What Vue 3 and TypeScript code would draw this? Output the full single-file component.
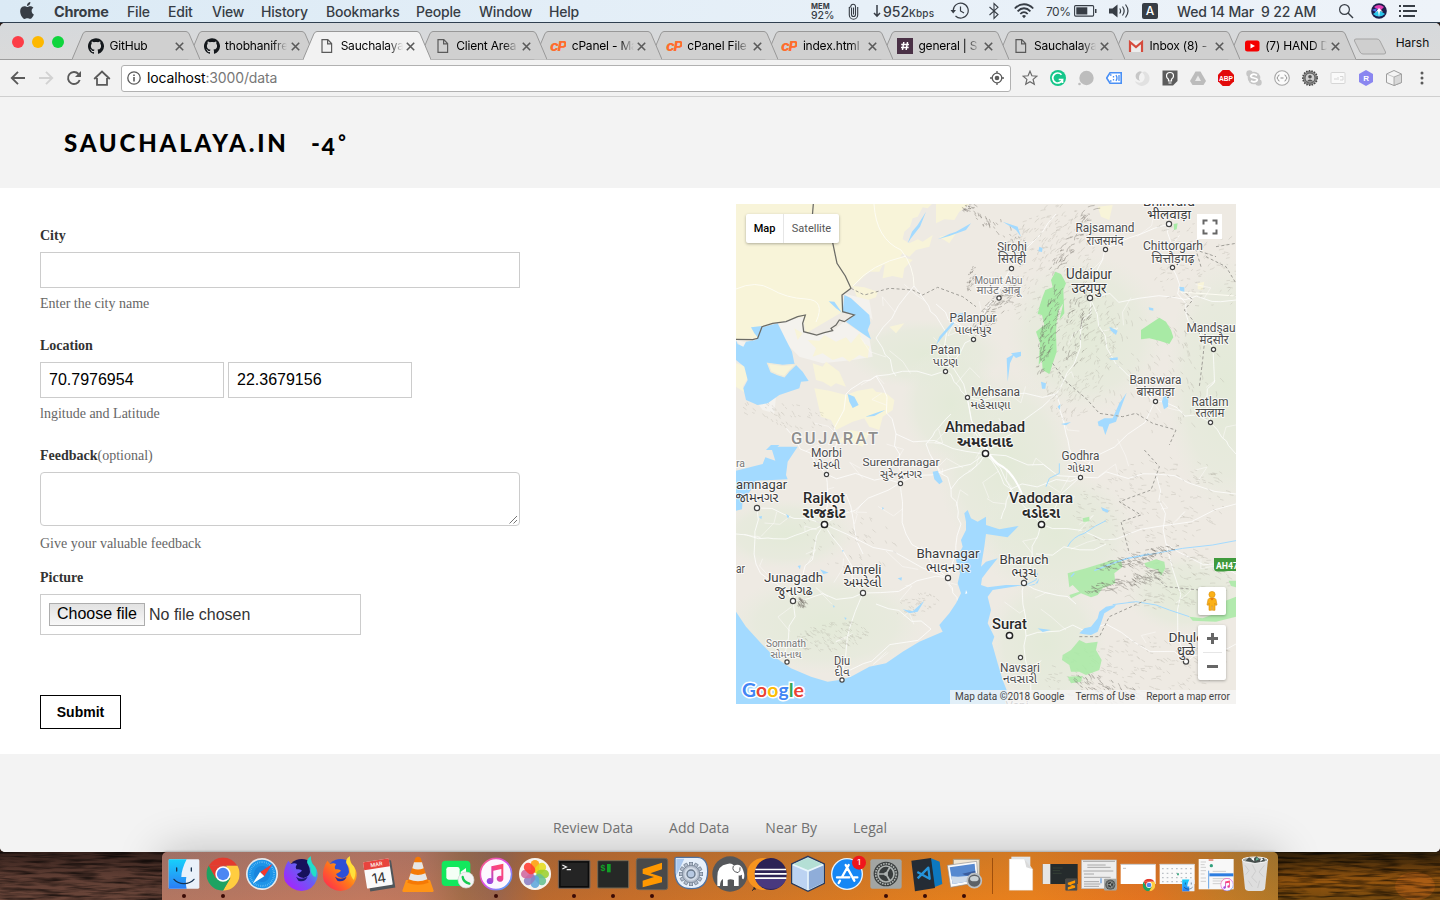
<script setup lang="ts">
interface Tab { icon: string; title: string; active?: boolean }
interface Place {
  name: string; x: number; y: number; w: number; size: number
  local?: string; lx?: number; ly?: number; lw?: number
  dot?: [number, number]; kind?: 'major' | 'mid' | 'minor'
}

const menus: string[] = ['File', 'Edit', 'View', 'History', 'Bookmarks', 'People', 'Window', 'Help']

const tabs: Tab[] = [
  { icon: 'github', title: 'GitHub' },
  { icon: 'github', title: 'thobhanifre' },
  { icon: 'page', title: 'Sauchalaya', active: true },
  { icon: 'page', title: 'Client Area' },
  { icon: 'cpanel', title: 'cPanel - Ma' },
  { icon: 'cpanel', title: 'cPanel File' },
  { icon: 'cpanel', title: 'index.html' },
  { icon: 'slack', title: 'general | S' },
  { icon: 'page', title: 'Sauchalaya' },
  { icon: 'gmail', title: 'Inbox (8) -' },
  { icon: 'youtube', title: '(7) HAND D' },
]

const links: string[] = ['Review Data', 'Add Data', 'Near By', 'Legal']

const places: Place[] = [
  { name: 'Bhilwara', x: 433, y: 2, w: 52, size: 13, local: 'भीलवाड़ा', ly: 14.5, lw: 44, dot: [433, 20], kind: 'mid' },
  { name: 'Rajsamand', x: 369, y: 28, w: 59, size: 12, local: 'राजसमंद', ly: 40.5, lw: 37, dot: [369.5, 45.5] },
  { name: 'Sirohi', x: 276, y: 47, w: 30, size: 12, local: 'सिरोही', ly: 59, lw: 28, dot: [275.5, 64.5] },
  { name: 'Chittorgarh', x: 437, y: 46, w: 60, size: 12, local: 'चित्तौड़गढ़', ly: 58.5, lw: 43, dot: [436.5, 63.5] },
  { name: 'Udaipur', x: 353, y: 75, w: 46, size: 14, local: 'उदयपुर', ly: 88.5, lw: 35, dot: [354, 94], kind: 'mid' },
  { name: 'Mount Abu', x: 262.5, y: 79.5, w: 48, size: 10.5, local: 'माउंट आबू', ly: 90, lw: 44, dot: [263, 94], kind: 'minor' },
  { name: 'Palanpur', x: 237, y: 118, w: 47, size: 12, local: 'પાલનપુર', ly: 130, lw: 37, dot: [237.5, 135.5] },
  { name: 'Patan', x: 209.5, y: 150, w: 30, size: 12, local: 'પાટણ', ly: 162, lw: 25, dot: [209.5, 167.5] },
  { name: 'Mandsau', x: 475, y: 128, w: 49, size: 12, local: 'मंदसौर', lx: 478, ly: 140, lw: 29, dot: [477.5, 145.5] },
  { name: 'Banswara', x: 419.5, y: 180, w: 52, size: 12, local: 'बांसवाड़ा', ly: 192, lw: 38, dot: [419.5, 197.5] },
  { name: 'Ratlam', x: 474, y: 201.5, w: 37, size: 12, local: 'रतलाम', ly: 213, lw: 29, dot: [474.5, 218.5] },
  { name: 'Mehsana', x: 259.5, y: 192, w: 49, size: 12, local: 'મહેસાણા', lx: 254.5, ly: 204.5, lw: 40, dot: [231.5, 193.5] },
  { name: 'Ahmedabad', x: 249, y: 228, w: 80, size: 14.5, local: 'અમદાવાદ', ly: 242.5, lw: 56, dot: [249.5, 249.5], kind: 'major' },
  { name: 'Morbi', x: 90.5, y: 253, w: 31, size: 12, local: 'મોરબી', ly: 265, lw: 27, dot: [90.5, 270.5] },
  { name: 'Surendranagar', x: 165, y: 262, w: 77, size: 11.5, local: 'સુરેન્દ્રનગર', ly: 274, lw: 42, dot: [164.5, 279.5] },
  { name: 'amnagar', x: 25.5, y: 285, w: 51, size: 13.5, local: 'જામનગર', lx: 21, ly: 297.5, lw: 43, dot: [21, 304], kind: 'mid' },
  { name: 'ra', x: 4.5, y: 263, w: 9, size: 11, kind: 'minor' },
  { name: 'ar', x: 4.5, y: 368.5, w: 9, size: 12 },
  { name: 'Rajkot', x: 88, y: 299, w: 42, size: 14.5, local: 'રાજકોટ', ly: 313.5, lw: 43, dot: [88.5, 320.5], kind: 'major' },
  { name: 'Godhra', x: 344.5, y: 256, w: 38, size: 12, local: 'ગોધરા', ly: 268, lw: 26, dot: [344.5, 273.5] },
  { name: 'Vadodara', x: 305, y: 299, w: 64, size: 14.5, local: 'વડોદરા', ly: 313.5, lw: 38, dot: [305.5, 320.5], kind: 'major' },
  { name: 'Bhavnagar', x: 212, y: 354, w: 63, size: 13.5, local: 'ભાવનગર', ly: 367.5, lw: 44, dot: [212, 374], kind: 'mid' },
  { name: 'Amreli', x: 126.5, y: 370, w: 38, size: 13.5, local: 'અમરેલી', ly: 383, lw: 38, dot: [127, 389], kind: 'mid' },
  { name: 'Junagadh', x: 57.5, y: 378, w: 59, size: 13.5, local: 'જુનાગઢ', ly: 391, lw: 38, dot: [57, 397], kind: 'mid' },
  { name: 'Bharuch', x: 288, y: 360, w: 49, size: 13.5, local: 'ભરૂચ', ly: 373, lw: 25, dot: [288, 379], kind: 'mid' },
  { name: 'Surat', x: 273.5, y: 425, w: 35, size: 14.5, dot: [273.5, 431.5], kind: 'major' },
  { name: 'Navsari', x: 284, y: 467.5, w: 40, size: 12, local: 'નવસારી', ly: 478.5, lw: 34, dot: [284.5, 453.5] },
  { name: 'Somnath', x: 50, y: 443, w: 40, size: 10.5, local: 'સોમનાથ', ly: 453.5, lw: 31, dot: [51, 458], kind: 'minor' },
  { name: 'Diu', x: 106, y: 460.5, w: 16, size: 12, local: 'દીવ', ly: 472, lw: 15, dot: [106, 476] },
  { name: 'Dhule', x: 450, y: 438, w: 35, size: 13.5, local: 'धुळे', ly: 451.5, lw: 18, dot: [450, 457.5], kind: 'mid' },
  { name: 'Vapi', x: 281, y: 506, w: 23, size: 12, kind: 'minor' },
]

/* Seeded generator, so hills and roads come out the same on every load. */
let seed = 11
const rnd = (): number => {
  seed = (seed * 16807) % 2147483647
  return seed / 2147483647
}

interface Ridge { x: number; y: number; rx: number; ry: number; tilt: number; n: number; len: number }
const hills = (r: Ridge): string => {
  let d = ''
  const a = (r.tilt * Math.PI) / 180
  for (let i = 0; i < r.n; i++) {
    const t = rnd() * Math.PI * 2
    const q = Math.sqrt(rnd())
    const u = Math.cos(t) * q * r.rx
    const v = Math.sin(t) * q * r.ry
    const px = r.x + u * Math.cos(a) - v * Math.sin(a)
    const py = r.y + u * Math.sin(a) + v * Math.cos(a)
    const b = a + (rnd() - 0.5) * 1.1
    const l = r.len * (0.4 + rnd())
    d += `M${px.toFixed(1)} ${py.toFixed(1)}l${(Math.cos(b) * l * 0.5).toFixed(1)} ${(Math.sin(b) * l * 0.5 + 1).toFixed(1)}l${(Math.cos(b + 0.5) * l * 0.5).toFixed(1)} ${(Math.sin(b + 0.5) * l * 0.5).toFixed(1)}`
  }
  return d
}
const strongHills: string = [
  { x: 258, y: 105, rx: 34, ry: 9, tilt: -50, n: 110, len: 4 },
  { x: 312, y: 128, rx: 46, ry: 8, tilt: -78, n: 90, len: 6 },
  { x: 340, y: 125, rx: 46, ry: 12, tilt: -82, n: 50, len: 6 },
  { x: 336, y: 35, rx: 45, ry: 7, tilt: -58, n: 50, len: 6 },
  { x: 390, y: 377, rx: 45, ry: 6, tilt: -14, n: 100, len: 5 },
  { x: 400, y: 354, rx: 42, ry: 6, tilt: -16, n: 100, len: 4 },
  { x: 65, y: 398, rx: 5, ry: 5, tilt: 20, n: 35, len: 3 },
  { x: 235, y: 74, rx: 14, ry: 4, tilt: -80, n: 36, len: 3 },
  { x: 262, y: 22, rx: 30, ry: 8, tilt: 30, n: 28, len: 3 },
  { x: 232, y: 3, rx: 9, ry: 3, tilt: -20, n: 20, len: 3 },
  { x: 370, y: 482, rx: 34, ry: 9, tilt: 15, n: 60, len: 4 },
].map(hills).join('')
const softHills: string = [
  { x: 310, y: 60, rx: 62, ry: 45, tilt: -62, n: 260, len: 5 },
  { x: 345, y: 150, rx: 70, ry: 32, tilt: -75, n: 240, len: 5 },
  { x: 460, y: 60, rx: 45, ry: 55, tilt: -45, n: 130, len: 4 },
  { x: 420, y: 165, rx: 70, ry: 60, tilt: 40, n: 130, len: 4 },
  { x: 415, y: 300, rx: 80, ry: 45, tilt: -12, n: 220, len: 4 },
  { x: 440, y: 375, rx: 60, ry: 30, tilt: -10, n: 170, len: 5 },
  { x: 400, y: 465, rx: 95, ry: 32, tilt: -8, n: 240, len: 4 },
  { x: 95, y: 432, rx: 36, ry: 14, tilt: -8, n: 140, len: 3 },
  { x: 110, y: 335, rx: 50, ry: 30, tilt: 10, n: 60, len: 3 },
  { x: 50, y: 210, rx: 48, ry: 12, tilt: 10, n: 60, len: 3 },
  { x: 180, y: 400, rx: 22, ry: 10, tilt: -20, n: 40, len: 3 },
].map(hills).join('')

const net: [number, number, number, number][] = [
  [249, 250, 305, 320], [249, 250, 164, 279], [249, 250, 231, 193], [249, 250, 344, 273], [225, 320, 212, 374],
  [249, 250, 320, 190], [164, 279, 88, 320], [88, 320, 21, 304], [88, 320, 90, 270], [88, 320, 57, 397],
  [88, 320, 127, 389], [88, 320, 212, 374], [127, 389, 106, 470], [57, 397, 51, 458], [57, 397, 127, 389],
  [127, 389, 212, 374], [90, 270, 164, 279], [90, 270, 50, 224], [305, 320, 344, 273], [305, 320, 288, 379],
  [288, 379, 290, 432], [290, 432, 295, 496], [290, 432, 370, 420], [370, 420, 450, 458], [305, 320, 380, 335],
  [380, 335, 500, 300], [344, 273, 420, 270], [420, 270, 500, 290], [344, 273, 419, 197], [419, 197, 474, 218],
  [474, 218, 477, 145], [477, 145, 450, 110], [436, 63, 450, 110], [354, 94, 436, 93], [436, 93, 500, 96],
  [354, 94, 369, 45], [369, 45, 433, 20], [354, 94, 340, 155], [340, 155, 320, 190], [320, 190, 231, 193],
  [231, 193, 209, 167], [209, 167, 237, 135], [237, 135, 275, 64], [275, 64, 320, 10], [237, 135, 200, 100],
  [209, 167, 140, 172], [140, 172, 110, 190], [110, 190, 90, 270], [140, 134, 160, 172], [178, 82, 140, 134],
  [178, 82, 200, 112], [200, 112, 231, 193], [436, 63, 433, 20], [354, 94, 380, 160], [380, 160, 419, 197],
  [344, 273, 330, 230], [330, 230, 320, 190], [164, 279, 170, 330], [170, 330, 212, 374], [57, 397, 20, 360],
  [20, 360, 21, 304], [0, 330, 50, 335], [50, 335, 88, 320], [140, 400, 195, 425], [106, 470, 195, 425],
  [212, 374, 222, 400], [160, 230, 249, 250], [160, 230, 140, 172], [160, 230, 164, 279], [231, 193, 249, 250],
  [430, 340, 450, 458], [430, 340, 500, 370], [450, 458, 500, 440], [474, 218, 500, 250], [420, 270, 430, 340],
  [300, 350, 370, 340], [288, 379, 340, 400], [215, 210, 190, 240], [190, 240, 215, 285], [215, 285, 249, 250],
  [215, 285, 225, 320], [275, 285, 265, 315], [249, 250, 275, 285], [275, 285, 344, 273], [110, 290, 127, 350],
]
const roads: string = net.map(([x1, y1, x2, y2]) => {
  const k = Math.hypot(x2 - x1, y2 - y1) * 0.12
  const j = (): number => (rnd() - 0.5) * k
  const p = (f: number): string => `${(x1 + (x2 - x1) * f + j()).toFixed(1)} ${(y1 + (y2 - y1) * f + j()).toFixed(1)}`
  return `M${x1} ${y1}L${p(0.2)} ${p(0.4)} ${p(0.6)} ${p(0.8)} ${x2} ${y2}`
}).join('')
const lanes: string = net.map(([x1, y1, x2, y2]) => {
  const mx = (x1 + x2) / 2
  const my = (y1 + y2) / 2
  return `M${mx.toFixed(1)} ${my.toFixed(1)}l${((rnd() - 0.5) * 34).toFixed(1)} ${((rnd() - 0.5) * 34).toFixed(1)} ${((rnd() - 0.5) * 34).toFixed(1)} ${((rnd() - 0.5) * 34).toFixed(1)}`
}).join('')

const teeth: number[] = Array.from({ length: 12 }, (_, i) => i * 30)
const petals: { a: number; c: string }[] = ['#ff9d0a', '#e6dc1c', '#9bd02f', '#67c08f', '#5fa7dd', '#8c7fc4', '#d0679f', '#ff3b30']
  .map((c, i) => ({ a: i * 45, c }))
</script>

<template>
  <div class="desktop">
    <svg class="symbols" width="0" height="0">
      <symbol id="s-chrome" viewBox="-50 -50 100 100">
        <path fill="#e33b2e" d="M-43-25A50 50 0 0 1 43-25H0Z" />
        <path fill="#e33b2e" d="M-43-25 0-25 0 0-22 13Z" />
        <path fill="#ffcd40" d="M43.300-25A50 50 0 0 1 0 50L22 12 10-25Z" />
        <path fill="#1da362" d="M-43-25A50 50 0 0 0 0 50L22 13-22 13Z" />
        <circle r="23" fill="#fff" /><circle r="18.500" fill="#4b87f3" />
      </symbol>
      <symbol id="s-itunes" viewBox="-50 -50 100 100">
        <defs><linearGradient id="gi" x1="0" y1="0" x2="1" y2="1"><stop offset="0" stop-color="#ff5a78" /><stop offset=".5" stop-color="#d94ff0" /><stop offset="1" stop-color="#35b9fb" /></linearGradient>
          <linearGradient id="gi2" x1="0" y1="1" x2="1" y2="0"><stop offset="0" stop-color="#7c4dff" /><stop offset=".6" stop-color="#f5428b" /><stop offset="1" stop-color="#ff5064" /></linearGradient></defs>
        <circle r="47" fill="#fdf8ff" stroke="url(#gi)" stroke-width="5" />
        <path fill="url(#gi2)" d="M-14-23 22-31V15A10 9 0 1 1 16 6V-15L-8-10V22A10 9 0 1 1-14 13Z" />
      </symbol>
      <symbol id="s-finder" viewBox="-50 -50 100 100">
        <defs><linearGradient id="gf" x1="0" y1="0" x2="0" y2="1"><stop offset="0" stop-color="#17d0fb" /><stop offset="1" stop-color="#2b7df5" /></linearGradient></defs>
        <rect x="-46" y="-44" width="92" height="88" rx="4" fill="#e9f1fa" />
        <path fill="url(#gf)" d="M-46-44H8C-2-25-8-5-8 9H7C5 20 5 32 8 44H-46Z" />
        <path fill="none" stroke="#17324f" stroke-width="4" stroke-linecap="round" d="M-22-18V-9M22-18V-9M-30 16C-15 33 15 33 30 16" />
      </symbol>
      <symbol id="s-sublime" viewBox="-50 -50 100 100">
        <rect x="-47" y="-47" width="94" height="94" rx="8" fill="#494949" stroke="#6b6256" stroke-width="3" />
        <path fill="#ff9800" d="M-28-15 30-34V-14L-5-2 30 9V25L-28 40V20L6 9-28-1Z" />
      </symbol>
      <symbol id="s-gear" viewBox="-50 -50 100 100">
        <rect x="-47" y="-44" width="94" height="88" rx="6" fill="#a2a5a3" />
        <circle r="37" fill="#393d3d" /><circle r="31" fill="none" stroke="#aeb3b1" stroke-width="5" stroke-dasharray="5 3" />
        <circle r="24" fill="none" stroke="#aeb3b1" stroke-width="5" />
        <path stroke="#aeb3b1" stroke-width="5" d="M0 0H-24M0 0 12-21M0 0 12 21" /><circle r="6" fill="#aeb3b1" />
      </symbol>
    </svg>

    <header class="menubar">
      <nav class="menus">
        <svg width="14" height="17" viewBox="2 0 20 24"><path fill="#373d45" d="M12.152 6.896c-.948 0-2.415-1.078-3.960-1.040-2.040.027-3.910 1.183-4.961 3.014-2.117 3.675-.546 9.103 1.519 12.090 1.013 1.454 2.208 3.090 3.792 3.039 1.520-.065 2.090-.987 3.935-.987 1.831 0 2.350.987 3.960.948 1.637-.026 2.676-1.480 3.676-2.948 1.156-1.688 1.636-3.325 1.662-3.415-.039-.013-3.182-1.221-3.220-4.857-.026-3.040 2.480-4.494 2.597-4.559-1.429-2.090-3.623-2.324-4.390-2.376-2-.156-3.675 1.090-4.610 1.090zM15.530 3.830c.843-1.012 1.400-2.427 1.245-3.830-1.207.052-2.662.805-3.532 1.818-.780.896-1.454 2.338-1.273 3.714 1.338.104 2.715-.688 3.559-1.701" /></svg>
        <b>Chrome</b>
        <span v-for="m in menus" :key="m">{{ m }}</span>
      </nav>
      <div class="status">
        <div class="mem"><b>MEM</b><span>92%</span></div>
        <svg width="11" height="17" viewBox="0 0 11 17"><path fill="none" stroke="#373d45" stroke-width="1.100" d="M3.500 4.500V11.500a2 2 0 0 0 4 0V3.500a2.300 2.300 0 0 0-4.600 0M1.300 4V12a4 4 0 0 0 8.400 0V4M5.500 4.500V11.500M2.900 3.500A3 3 0 0 0 1.300 5" /></svg>
        <div class="net"><svg width="8" height="14" viewBox="0 0 8 14"><path fill="none" stroke="#373d45" stroke-width="1.500" d="M4 1V12M1 9 4 12.200 7 9" /></svg><span>952</span><small>Kbps</small></div>
        <svg width="20" height="18" viewBox="0 0 20 18"><path fill="none" stroke="#373d45" stroke-width="1.200" d="M3.200 8.500A7.500 7.500 0 1 1 5.500 14M10.500 4.500V9L14 11" /><path fill="#373d45" d="M.5 8H6L3.200 11.500Z" /></svg>
        <svg width="20" height="18" viewBox="0 0 20 18"><path fill="none" stroke="#373d45" stroke-width="1.100" d="M5.500 5 14 12.500 10 16.500V1.500L14 5.300 5.500 13" /></svg>
        <svg width="20" height="16" viewBox="0 0 20 16"><g fill="none" stroke="#373d45" stroke-width="1.800"><path d="M.8 5.500C6-.2 14-.2 19.200 5.500M3.600 8.300C7.500 4.200 12.500 4.200 16.400 8.300M6.300 11C8.600 8.600 11.400 8.600 13.700 11" /></g><path fill="#373d45" d="M8 13Q10 11.200 12 13L10 15.300Z" /></svg>
        <span class="pct">70%</span>
        <svg width="24" height="12" viewBox="0 0 24 12"><rect x=".6" y=".6" width="19" height="10.500" rx="1" fill="none" stroke="#373d45" stroke-width="1.100" /><rect x="2.300" y="2.300" width="11" height="7.200" fill="#373d45" /><path fill="#373d45" d="M21 4H22.500V8H21Z" /></svg>
        <svg width="22" height="16" viewBox="0 0 22 16"><path fill="#373d45" d="M0 5.500H3.500L8.500 1.500V14.500L3.500 10.500H0Z" /><path fill="none" stroke="#373d45" stroke-width="1.200" d="M10.700 5.500Q12.500 8 10.700 10.500M13.500 3.500Q16.800 8 13.500 12.500M16.500 1.500Q21.500 8 16.500 14.500" /></svg>
        <span class="input-a">A</span>
        <span class="date">Wed 14 Mar&nbsp; 9 22 AM</span>
        <svg width="16" height="16" viewBox="0 0 16 16"><circle cx="6.500" cy="6.500" r="4.900" fill="none" stroke="#373d45" stroke-width="1.200" /><path stroke="#373d45" stroke-width="1.400" d="M10 10 15 15" /></svg>
        <svg width="16" height="16" viewBox="-8 -8 16 16"><circle r="7.800" fill="#1c1d4b" /><path fill="#e23fb5" d="M-5-4Q0-8 5-4L1 0Z" /><path fill="#2bc6ea" d="M-6 3 0-1 6 3Q0 8-6 3Z" /><path fill="#fff" d="M0-3 4 1 1 0 0 6-1 0-4 2Z" /><path fill="#4c67e8" d="M-7-1-2-3-3 1Z" /></svg>
        <svg width="20" height="14" viewBox="0 0 20 14"><path stroke="#373d45" stroke-width="1.800" d="M1 2H3M5 2H17M1 7H3M5 7H19M1 12H3M5 12H17" /></svg>
      </div>
    </header>

    <section class="window">
      <div class="tabstrip">
        <div class="lights"><i class="red" /><i class="amber" /><i class="green" /></div>
        <div class="tabs">
          <div v-for="(t, i) in tabs" :key="i" class="tab" :class="{ active: t.active }" :style="{ zIndex: t.active ? 30 : 20 - i }">
            <svg class="shape" width="128" height="29" viewBox="0 0 128 29">
              <path class="face" d="M0 28.500 10.800 3Q12 .5 14 .5H114Q116 .5 117.200 3L128 28.500Z" />
              <path class="edge" d="M0 28.500 10.800 3Q12 .5 14 .5H114Q116 .5 117.200 3L128 28.500" />
            </svg>
            <svg class="fav" width="16" height="16" viewBox="0 0 16 16">
              <g v-if="t.icon === 'github'" transform="scale(.667)"><path fill="#14181c" d="M12 .297c-6.630 0-12 5.373-12 12 0 5.303 3.438 9.800 8.205 11.385.6.113.82-.258.82-.577 0-.285-.010-1.040-.015-2.040-3.338.724-4.042-1.610-4.042-1.610C4.422 18.070 3.633 17.700 3.633 17.700c-1.087-.744.084-.729.084-.729 1.205.084 1.838 1.236 1.838 1.236 1.070 1.835 2.809 1.305 3.495.998.108-.776.417-1.305.76-1.605-2.665-.3-5.466-1.332-5.466-5.930 0-1.310.465-2.380 1.235-3.220-.135-.303-.54-1.523.105-3.176 0 0 1.005-.322 3.300 1.230.96-.267 1.980-.399 3-.405 1.020.006 2.040.138 3 .405 2.280-1.552 3.285-1.230 3.285-1.230.645 1.653.24 2.873.12 3.176.765.84 1.230 1.910 1.230 3.220 0 4.610-2.805 5.625-5.475 5.920.42.36.81 1.096.81 2.220 0 1.606-.015 2.896-.015 3.286 0 .315.21.69.825.57C20.565 22.092 24 17.592 24 12.297c0-6.627-5.373-12-12-12" /></g>
              <path v-else-if="t.icon === 'page'" fill="none" stroke="#5a5a5a" stroke-width="1.200" d="M3 1.600H8.800L12.600 5.600V14.400H3ZM8.600 1.600V5.800H12.600" />
              <text v-else-if="t.icon === 'cpanel'" class="cp" x="0" y="12.500" textLength="16" lengthAdjust="spacingAndGlyphs">cP</text>
              <g v-else-if="t.icon === 'slack'"><rect width="16" height="16" fill="#4a3146" /><path stroke="#fff" stroke-width="1.500" d="M6.800 4 5.500 12M10.500 4 9.200 12M4.200 6.500H12M4 9.500H11.700" /></g>
              <g v-else-if="t.icon === 'gmail'"><rect x="1" y="2.500" width="14" height="11.500" fill="#ececec" /><path fill="none" stroke="#d54b3d" stroke-width="2.200" d="M2 14V4L8 9 14 4V14" /></g>
              <g v-else><rect x="1" y="2.500" width="14.500" height="11" rx="2.500" fill="#f40000" /><path fill="#fff" d="M6.500 5.500 11 8 6.500 10.500Z" /></g>
            </svg>
            <span class="title">{{ t.title }}</span>
            <svg class="close" width="9" height="9" viewBox="0 0 9 9"><path stroke="#5a5a5a" stroke-width="1.600" d="M.8.8 8.200 8.200M8.200.8.8 8.200" /></svg>
          </div>
        </div>
        <svg class="newtab" width="34" height="18" viewBox="0 0 34 18"><path fill="#cfcfcf" stroke="#a5a5a5" d="M3 1H24Q26 1 27 3L32.500 14Q33 16 31 16H10Q8 16 7 14L1.500 3Q1 1 3 1Z" /></svg>
        <span class="user">Harsh</span>
      </div>

      <div class="toolbar">
        <div class="navbtns">
          <svg width="16" height="16" viewBox="0 0 16 16"><path fill="none" stroke="#5a5a5a" stroke-width="1.900" d="M15 8H2.500M8 1.800 1.800 8 8 14.200" /></svg>
          <svg width="16" height="16" viewBox="0 0 16 16"><path fill="none" stroke="#d2d2d2" stroke-width="1.900" d="M1 8H13.500M8 1.800 14.200 8 8 14.200" /></svg>
          <svg width="16" height="16" viewBox="0 0 16 16"><path fill="none" stroke="#5a5a5a" stroke-width="1.900" d="M13.700 10A6 6 0 1 1 12.500 4" /><path fill="#5a5a5a" d="M15 1V7H9Z" /></svg>
          <svg width="18" height="16" viewBox="0 0 18 16"><path fill="none" stroke="#5a5a5a" stroke-width="1.800" d="M1.200 9 9 1.500 16.800 9M4 8V14.800H14V8" /></svg>
        </div>
        <div class="omnibox">
          <svg width="14" height="14" viewBox="0 0 14 14"><circle cx="7" cy="7" r="6.200" fill="none" stroke="#5a5a5a" stroke-width="1.300" /><path stroke="#5a5a5a" stroke-width="1.600" d="M7 6V10.500M7 3.500V5" /></svg>
          <span class="url">localhost<i>:3000/data</i></span>
          <svg width="16" height="16" viewBox="-8 -8 16 16"><circle r="4.800" fill="none" stroke="#5a5a5a" stroke-width="1.300" /><circle r="2.300" fill="#5a5a5a" /><path stroke="#5a5a5a" stroke-width="1.300" d="M0-7V-5M0 7V5M-7 0H-5M7 0H5" /></svg>
        </div>
        <div class="extensions">
          <svg viewBox="-8 -8 16 16"><path fill="none" stroke="#6b6b6b" stroke-width="1.200" d="M0-6.800 1.900-2.200 6.900-1.800 3.100 1.400 4.300 6.300 0 3.700-4.300 6.300-3.100 1.400-6.900-1.800-1.900-2.200Z" /></svg>
          <svg viewBox="-8 -8 16 16"><circle r="8" fill="#15c68a" /><path fill="none" stroke="#fff" stroke-width="1.700" d="M3.500-3.300A5 5 0 1 0 4.500 1.500H.7M4.500 1.500V5" /></svg>
          <svg viewBox="-8 -8 16 16"><circle r="7.200" fill="#bdbdbd" cx=".5" /><circle cx="-6.500" cy="6" r="1.300" fill="#bdbdbd" /></svg>
          <svg viewBox="-8 -8 16 16"><path fill="#fff" stroke="#4a90f5" stroke-width="1.600" d="M-7.300 0-4-5.200H7.200V5.200H-4Z" /><path stroke="#4a90f5" stroke-width="1.300" d="M-2.500-3H-4M-2.500 3H-4M-.5-2V-.5M-.5 1V2.500M2-3Q4 0 2 3M5-3V3" fill="none" /></svg>
          <svg viewBox="-8 -8 16 16"><path fill="#e1e1e1" d="M3-6.500A7.500 7.500 0 1 1-7 3Q-1 7 2 2 4-2 0-6Z" /><path fill="#c7c7c7" d="M-6-4Q-3-8 0-6-5-2-2 3-8 1-6-4Z" /></svg>
          <svg viewBox="-8 -8 16 16"><path fill="#5c5c5c" d="M-7.500-7.500H7.500V3L3 7.500H-7.500Z" /><path fill="none" stroke="#fff" stroke-width="1.200" d="M-1.500 3V1.300Q-3.500 0-3.500-2A3.500 3.500 0 0 1 3.500-2Q3.500 0 1.500 1.300V3ZM-1.500 5H1.500" /></svg>
          <svg viewBox="-8 -8 16 16"><path fill="#bcbcbc" d="M-2.500-6.500H2.500L8 3 5.500 7H-5.500L-8 3Z" /><path fill="#e9e9e9" d="M0-2.500 3 3H-3Z" /></svg>
          <svg viewBox="-8 -8 16 16"><path fill="#e20a0a" d="M-3.300-8H3.300L8-3.300V3.300L3.300 8H-3.300L-8 3.300V-3.300Z" /><text class="abp" x="-7" y="2.700" textLength="14" lengthAdjust="spacingAndGlyphs">ABP</text></svg>
          <svg viewBox="-8 -8 16 16"><circle r="6.300" fill="#c6c6c6" /><circle cx="-4.500" cy="-4.500" r="3.200" fill="#c6c6c6" /><circle cx="4.500" cy="4.500" r="3.200" fill="#c6c6c6" /><path fill="none" stroke="#fff" stroke-width="1.700" d="M3-2.500Q0-5-2.500-3T0 0 2.500 3-3 2.800" /></svg>
          <svg viewBox="-8 -8 16 16"><circle r="7.300" fill="#fbfbfb" stroke="#a5a5a5" stroke-width="1.100" /><path fill="none" stroke="#8c8c8c" d="M-2.500-3Q-4-3-4-1.500L-5 0-4 1.500Q-4 3-2.500 3M2.500-3Q4-3 4-1.500L5 0 4 1.500Q4 3 2.500 3M-1.500 0H1.500" /></svg>
          <svg viewBox="-8 -8 16 16"><circle r="7.200" fill="#8a8a8a" stroke="#484848" stroke-width="1.600" stroke-dasharray="1.500 1.200" /><circle r="5" fill="#cfcfcf" stroke="#555" /><circle cy="-1.200" r="1.800" fill="#555" /><path fill="#555" d="M-3.300 3.500Q0-.5 3.300 3.500Z" /></svg>
          <svg viewBox="-8 -8 16 16"><rect x="-7" y="-5.500" width="14" height="11" rx="1" fill="#fafafa" stroke="#d6d6d6" /><path stroke="#d6d6d6" d="M-4 1H-1M0-1V2M2-1.500H5V2H2" fill="none" /></svg>
          <svg viewBox="-8 -8 16 16"><path fill="#8a86f0" d="M0-8 7-4V4L0 8-7 4V-4Z" /><text class="rex" x="-2.700" y="3">R</text></svg>
          <svg viewBox="-8 -8 16 16"><path fill="#f4f4f4" stroke="#9c9c9c" d="M0-7.500 7.500-4V4.500L0 7.500-7.500 4.500V-4Z" /><path fill="#d8d8d8" stroke="#9c9c9c" stroke-width=".8" d="M0-1 7.500-4V4.500L0 7.500Z" /><path fill="none" stroke="#bdbdbd" stroke-width=".8" d="M0-1-7.500-4" /></svg>
          <svg viewBox="-8 -8 16 16"><g fill="#5a5a5a"><circle cy="-5" r="1.500" /><circle r="1.500" /><circle cy="5" r="1.500" /></g></svg>
        </div>
      </div>

      <div class="brandbar"><span class="brand">SAUCHALAYA.IN</span><span class="temp">-<em>4</em><sup>°</sup></span></div>

      <main class="content">
        <form class="form" @submit.prevent>
          <label>City</label>
          <div class="field full" />
          <p class="hint">Enter the city name</p>
          <label>Location</label>
          <div class="pair"><div class="field">70.7976954</div><div class="field">22.3679156</div></div>
          <p class="hint">lngitude and Latitude</p>
          <label>Feedback<span>(optional)</span></label>
          <div class="area"><svg width="9" height="9" viewBox="0 0 9 9"><path stroke="#666" stroke-width=".9" d="M.5 8.500 8 1M4.500 8.500 8 5" /></svg></div>
          <p class="hint tight">Give your valuable feedback</p>
          <label>Picture</label>
          <div class="file"><span class="choose">Choose file</span><span>No file chosen</span></div>
          <button class="submit">Submit</button>
        </form>

        <div class="map">
          <svg class="canvas" width="500" height="500" viewBox="0 0 500 500">
            <defs>
              <radialGradient id="plain"><stop offset="0" stop-color="#e3ead8" /><stop offset=".7" stop-color="#e5eadb" stop-opacity=".7" /><stop offset="1" stop-color="#e8ebdf" stop-opacity="0" /></radialGradient>
            </defs>
            <rect width="500" height="500" fill="#eeeae3" />
            <g fill="url(#plain)">
              <ellipse cx="270" cy="260" rx="70" ry="95" /><ellipse cx="320" cy="330" rx="80" ry="65" /><ellipse cx="310" cy="440" rx="60" ry="70" />
              <ellipse cx="90" cy="420" rx="100" ry="50" /><ellipse cx="490" cy="180" rx="60" ry="130" /><ellipse cx="350" cy="130" rx="80" ry="80" />
              <ellipse cx="190" cy="150" rx="80" ry="35" /><ellipse cx="50" cy="330" rx="70" ry="35" /><ellipse cx="450" cy="390" rx="60" ry="40" />
              <ellipse cx="215" cy="200" rx="50" ry="60" />
            </g>

            <g transform="translate(0 -4) scale(.33333)">
              <path fill="#f8f4d9" d="M0 0H600L575 25 560 22 545 50 530 55 522 80 505 95 500 118 520 130 545 118 560 125 590 105 580 140 540 150 520 170 500 160 480 185 440 195 430 215 400 215 345 265 318 285 320 335 210 400 200 350 78 380 65 415 0 418Z" />
              <path fill="#f8f4d9" d="M600 10 700 12 670 35 655 60 625 58 600 70ZM610 110 660 100 640 130ZM450 170 490 168 530 180 505 205 500 235 470 228 440 235ZM480 400 460 380 505 370ZM350 258 385 262 425 275 420 292 395 300 400 325 370 310ZM235 565 280 572 330 585 365 572 410 565 420 575 450 580 475 600 470 630 440 650 430 690 400 680 385 655 350 665 320 680 300 690 285 660 255 650ZM340 690 400 700 380 740 340 725 300 730ZM0 430 30 440 0 470ZM0 490 30 500 38 530 20 560 30 580 0 560ZM1085 20 1130 15 1120 60 1095 50ZM1385 250 1405 245 1400 270 1385 268Z" />
              <path fill="#f4f2ee" d="M125 370 160 360 205 350 203 395 242 405 290 392 325 365 400 415 410 470 350 480 260 490 190 470 150 430Z" />
              <path fill="#f8f4d9" d="M175 385 200 400 185 420ZM215 420 250 422 265 405 300 425 330 412 345 430 370 400 385 430 400 440 395 475 370 465 340 485 320 470 290 480 260 460 230 470 240 445ZM230 490 260 500 270 485 310 515 330 560 300 550 285 560 260 545 240 540Z" />
              <path fill="#f4f2ee" d="M0 420 40 430 20 445ZM65 610 120 590 115 640 80 630ZM320 280 400 300 410 360 345 295Z" />
            </g>

            <path :d="lanes" fill="none" stroke="#fbfaf7" stroke-width=".7" opacity=".8" />
            <path :d="roads" fill="none" stroke="#fff" stroke-width="1" opacity=".75" />
            <path fill="none" stroke="#fff" stroke-width="2" d="M249 240Q252 252 262 260 277 267 286 290" />
            <path fill="none" stroke="#fdfcf3" d="M138 0Q140 35 165 46 178 62 178 82M0 85Q20 76 35 85T70 95 80 118M117 82Q135 60 170 52M445 88 500 92" />
            <path :d="softHills" fill="none" stroke="#a8a298" stroke-width=".7" opacity=".38" />

            <g transform="translate(0 -4) scale(.33333)">
              <path fill="#a3daff" d="M0 421 5 432 22 440 30 425 60 420 78 382 125 370 150 420 168 455 175 490 200 515 218 543 195 545 190 565 130 585 95 610 65 615 30 600 22 565 35 540 25 500 0 480ZM45 382 78 378 65 412 55 400ZM325 285 345 295 400 345 403 370 395 390 405 418 372 395 330 365 355 345 320 337ZM278 304 295 305 318 338 300 325ZM335 582 355 590 368 615 350 624 340 605ZM388 650 430 635 448 630 415 648ZM105 735 130 735 115 750H90ZM515 130 528 95 545 75 570 35 552 80 525 115ZM605 118 640 102 660 95 705 70 690 90 640 108ZM600 435 610 410 650 365 655 370 620 410ZM655 345 680 338 684 350 665 358Z" />
              <path fill="#f8f4d9" stroke="#efeada" stroke-width="4" d="M95 490 140 496 180 493 160 512 145 530 125 524 105 515Z" />
              <path fill="#a3daff" d="M910 140 920 145 918 156 907 154ZM825 460 855 455 855 468 840 474ZM812 475 835 462 822 490 815 545ZM915 545 930 550 928 566 918 566ZM1120 380 1145 392 1140 405 1125 392ZM1120 475 1145 472 1145 480 1125 480ZM1238 322 1252 325 1252 332 1240 330ZM1330 260 1345 262 1345 275 1333 272ZM1283 585 1297 592 1296 620 1284 628 1278 605ZM1085 665 1105 655 1130 655 1150 610 1172 578 1160 610 1140 665 1120 672 1108 705 1100 680 1088 678ZM975 672 1005 666 990 676ZM800 65 845 80 855 110 840 90ZM965 620 973 612 972 630Z" />
              <path fill="#a8eaa5" d="M958 215 975 222 990 250 982 270 985 340 970 360 982 310 968 330 962 365 960 400 962 455 940 522 920 510 918 480 908 495 912 430 900 395 925 375 918 345 905 342 912 315 920 290 928 270 950 262 945 240Z" />
              <path fill="#a8eaa5" d="M1215 390 1245 370 1270 353 1290 365 1305 390 1312 412 1300 432 1270 422 1240 415 1215 418ZM1313 72 1325 70 1322 88 1314 90Z" />
              <g transform="translate(0 750)">
                <path fill="#a3daff" d="M0 485 30 530 75 580 115 620 165 655 225 680 275 695 310 690 345 680 400 650 450 640 500 605 550 575 620 545 610 525 640 490 660 460 675 430 665 400 672 370 660 330 680 290 675 270 690 240 690 215 685 190 695 180 705 205 725 215 750 200V225L790 238 848 228 815 262 750 252 745 290 735 350 750 335 785 325 755 362 738 385 735 405 755 412 810 405 865 405 770 420 755 440 765 480 755 520 775 560 768 580 785 640 800 690 812 720 815 770H0Z" />
                <path fill="#a3daff" d="M0 62 80 42 88 22 118 32 105-10 185-10 155 35 150 75 155 88 60 92 45 120 20 150 18 178 0 182ZM590 65 605 62 620 95 610 103 595 88ZM252 358 278 368 262 372ZM500 478 530 484 565 452 545 485 520 490ZM485 385 498 382 496 392ZM68 200 78 198 76 208ZM150 192 160 198 156 206ZM185 348 194 346 192 358ZM318 300 324 302 320 306ZM438 172 444 174 440 180ZM290 466 296 468 294 474ZM325 502 332 504 328 510ZM895 405 910 385 905 400 870 408ZM1095 172 1118 180 1115 188 1100 182ZM1030 550 1045 535 1065 530 1085 505 1090 485 1110 470 1140 464 1135 472 1105 490 1095 520 1085 545 1065 555 1040 552ZM905 535 945 540 920 546ZM860 190 870 188 868 204Z" />
                <path fill="none" stroke="#a3daff" stroke-width="3" d="M995 290Q1010 260 1045 250 1080 225 1110 212M1130 340 1175 325 1260 310 1340 295 1430 285 1510 270M1130 464 1200 455 1260 465 1300 480 1360 500M870 405 900 390 905 370M930 110 940 85 970 70V40" />
                <path fill="#a8eaa5" fill-opacity=".85" d="M995 370 1050 355 1130 330 1155 330 1160 350 1135 370 1138 400 1100 415 1085 435 1065 442 1035 430 1005 445 1000 435 1030 425 1010 405 1000 412ZM1225 340 1260 328 1285 335 1288 355 1275 378 1265 360 1230 350ZM1040 205 1060 200 1060 214 1042 216ZM980 615 1005 600 1030 570 1050 580 1085 575 1080 600 1097 630 1090 660 1050 675 1030 665 1005 665 1000 645 978 630ZM995 680 1040 678 1035 695 1005 700ZM1360 500 1400 505 1440 490 1450 460 1500 440V500L1440 515 1370 512ZM1478 392H1500V412L1485 408Z" />
                <path fill="none" stroke="#a3daff" stroke-width="4" d="M1075 362 1130 340 1175 325 1240 312M1005 380 1015 370" />
                <path fill="#fff" d="M690 420 694 430 688 432Z" />
              </g>
            </g>
            <path :d="strongHills" fill="none" stroke="#77736c" stroke-width=".75" opacity=".55" />

            <g fill="none" transform="translate(0 -4) scale(.33333)">
              <path stroke="#6b6b66" stroke-width="3.800" d="M232 12 228 60 290 128 303 190 328 228 345 265 318 285 320 335 355 345 340 355 325 365 310 360 300 375 285 385 290 392 265 398 242 405 203 395 200 370 208 345 185 350 150 365 110 370 78 380 65 415 50 419 0 418" />
              <g stroke="#a09e98" stroke-width="3" stroke-dasharray="9 7"><path d="M345 265 385 285 460 265 530 270 560 285 605 262 680 290 720 320M1440 140 1500 130M1350 280 1370 300 1345 330 1370 360 1390 400 1405 430 1400 480 1390 560M950 490 990 545 1050 595 1090 640 1160 650 1200 640 1250 670 1320 690 1300 735M1410 170 1470 200 1500 250M1395 200 1380 150 1440 170" /><path d="M1225 750 1270 800 1245 870 1150 905 1215 945 1155 965 1180 1060M1230 1100 1290 1160 1390 1170M1030 1310 1090 1310 1120 1250 1230 1200" /></g>
            </g>

            <path fill="#3f9a3c" d="M478 354H500V367H492L488 367.500H481Q478 367 478 364Z" />
            <text class="shield" x="480" y="364.500" textLength="22" lengthAdjust="spacingAndGlyphs">AH47</text>
            <text class="state" x="55" y="239.500" textLength="87" lengthAdjust="spacing">GUJARAT</text>

            <g v-for="p in places" :key="p.name" class="place" :class="p.kind">
              <circle v-if="p.dot" :cx="p.dot[0]" :cy="p.dot[1]" :r="p.kind === 'major' ? 3.100 : p.kind === 'mid' ? 2.600 : 2.100" />
              <text :x="p.x" :y="p.y" :font-size="p.size" :textLength="p.w" lengthAdjust="spacingAndGlyphs">{{ p.name }}</text>
              <text v-if="p.local" class="local" :x="p.lx ?? p.x" :y="p.ly" :font-size="p.size" :textLength="p.lw" lengthAdjust="spacingAndGlyphs">{{ p.local }}</text>
            </g>

            <text class="google" x="6" y="492.500" textLength="62" lengthAdjust="spacingAndGlyphs"><tspan fill="#4285f4">G</tspan><tspan fill="#ea4335">o</tspan><tspan fill="#fbbc05">o</tspan><tspan fill="#4285f4">g</tspan><tspan fill="#34a853">l</tspan><tspan fill="#ea4335">e</tspan></text>
          </svg>
          <div class="types"><b>Map</b><span>Satellite</span></div>
          <div class="full-screen"><svg width="16" height="16" viewBox="0 0 16 16"><path fill="none" stroke="#666" stroke-width="2" d="M1.500 5.500V1.500H5.500M10.500 1.500H14.500V5.500M14.500 10.500V14.500H10.500M5.500 14.500H1.500V10.500" /></svg></div>
          <div class="pegman"><svg width="14" height="20" viewBox="0 0 14 20"><circle cx="7" cy="3.500" r="3.100" fill="#fbb116" stroke="#d98d0a" stroke-width=".6" /><path fill="#fbb116" stroke="#d98d0a" stroke-width=".6" d="M4.500 7H9.500L11 8.500 12 14 10.500 14.300 10 12V19.300H7.500V15H6.500V19.300H4V12L3.500 14.300 2 14 3 8.500Z" /><path fill="#e5730e" d="M5 7.200H9L7 9.500Z" /></svg></div>
          <div class="zoom"><i class="plus" /><i class="minus" /></div>
          <div class="credits"><span>Map data ©2018 Google</span><span>Terms of Use</span><span>Report a map error</span></div>
        </div>
      </main>

      <footer class="footer"><a v-for="l in links" :key="l">{{ l }}</a></footer>
    </section>

    <div class="shelf">
      <svg class="wood" width="1440" height="48" viewBox="0 0 1440 48">
        <defs>
          <filter id="grain" x="0" y="0" width="100%" height="100%"><feTurbulence type="fractalNoise" baseFrequency=".03 .35" numOctaves="3" seed="4" /><feColorMatrix values="0 0 0 0 0  0 0 0 0 0  0 0 0 0 0  2.400 0 0 0 -.95" /></filter>
          <linearGradient id="wl" x1="0" y1="0" x2=".1" y2="1"><stop offset="0" stop-color="#33201b" /><stop offset=".5" stop-color="#5e3d33" /><stop offset="1" stop-color="#6a463a" /></linearGradient>
          <linearGradient id="wr" x1="0" y1="0" x2="0" y2="1"><stop offset="0" stop-color="#2e1f0a" /><stop offset=".6" stop-color="#96560f" /><stop offset="1" stop-color="#75490f" /></linearGradient>
        </defs>
        <rect width="720" height="48" fill="url(#wl)" /><rect x="720" width="720" height="48" fill="url(#wr)" />
        <ellipse cx="1415" cy="34" rx="20" ry="14" fill="#c0641a" opacity=".5" />
        <rect width="1440" height="48" filter="url(#grain)" opacity=".65" />
      </svg>
      <div class="dock">
        <div class="app run"><svg viewBox="-54 -54 108 108"><use href="#s-finder" x="-50" y="-50" width="100" height="100" /></svg></div>
        <div class="app run"><svg viewBox="-54 -54 108 108"><use href="#s-chrome" x="-50" y="-50" width="100" height="100" /></svg></div>
        <div class="app"><svg viewBox="-54 -54 108 108"><circle r="48" fill="#e6e9ec" /><circle r="43" fill="#1e94e8" /><circle r="36" fill="none" stroke="#7ccaf8" stroke-width="6" stroke-dasharray="1.500 4" /><circle r="24" fill="#1676d2" opacity=".5" /><path fill="#f2382e" d="M32-31-5-6 7 7Z" /><path fill="#fff" d="M-28 29-6-6 7 7Z" /></svg></div>
        <div class="app"><svg viewBox="-54 -54 108 108"><defs><linearGradient id="fd" x1="0" y1="1" x2="1" y2="0"><stop offset="0" stop-color="#b514ff" /><stop offset=".55" stop-color="#6a5cf5" /><stop offset="1" stop-color="#21f0c2" /></linearGradient></defs><circle cx="2" cy="-2" r="43" fill="#17115c" /><path fill="url(#fd)" d="M-45-27-38-40-30-30Q-20-34-12-30-18-22-14-14 0-16 3-10-2-4-12 0-8 10 8 12 25 8 27-6 27-18 22-26 20-42 30-53 28-35 42-22 54-5 48 16 36 50 2 51-30 50-48 22-56-2-45-27Z" /><path fill="#22dfc9" d="M30-53Q26-35 42-22 50-10 44 8 36 10 30-6 30-24 20-30 14-44 30-53Z" /><path fill="#1e1a73" d="M-15 8Q0 20 20 8 12 26-8 20Z" /></svg></div>
        <div class="app"><svg viewBox="-54 -54 108 108"><defs><linearGradient id="ff" x1="0" y1="1" x2="1" y2="0"><stop offset="0" stop-color="#ff1b5b" /><stop offset=".5" stop-color="#ff7a18" /><stop offset="1" stop-color="#ffe92e" /></linearGradient></defs><circle cx="2" cy="-2" r="43" fill="#2d4fd6" /><path fill="url(#ff)" d="M-45-27-38-40-30-30Q-20-34-12-30-18-22-14-14 0-16 3-10-2-4-12 0-8 10 8 12 25 8 27-6 27-18 22-26 20-42 30-53 28-35 42-22 54-5 48 16 36 50 2 51-30 50-48 22-56-2-45-27Z" /><path fill="#ffe03a" d="M30-53Q26-35 42-22 50-5 42 18 34 12 30-6 30-24 20-30 14-44 30-53Z" /><path fill="#2a2f9c" d="M-15 8Q0 20 20 8 12 26-8 20Z" /></svg></div>
        <div class="app"><svg viewBox="-54 -54 108 108"><g transform="rotate(-9)"><path fill="#50565b" d="M-38-35H42V48H-34Z" /><rect x="-42" y="-42" width="78" height="80" rx="3" fill="#fafafa" /><path fill="#e8443d" d="M-42-39Q-42-42-39-42H33Q36-42 36-39V-18H-42Z" /><text class="mar" x="-3" y="-24">MAR</text><text class="day" x="-3" y="27">14</text></g></svg></div>
        <div class="app"><svg viewBox="-54 -54 108 108"><path fill="#ff9416" d="M-36 18H36L47 50Q47 54 43 54H-43Q-47 54-47 50Z" /><path fill="#f57905" d="M-8-48Q0-55 8-48L32 26Q0 38-32 26Z" /><path fill="#e6e6e6" d="M-12-35H12L17-17Q0-10-17-17ZM-22-2Q0 8 22-2L28 16Q0 28-28 16Z" /></svg></div>
        <div class="app"><svg viewBox="-54 -54 108 108"><rect x="-46" y="-40" width="86" height="76" rx="12" fill="#12e85d" /><rect x="-32" y="-21" width="40" height="38" rx="7" fill="#f4fff6" /><path fill="#f4fff6" d="M11-7 27-18V12L11 4Z" /><circle cx="27" cy="18" r="24" fill="#f4f4f4" stroke="#cfd6d0" stroke-width="2" /><path fill="none" stroke="#16ca50" stroke-width="7" stroke-linecap="round" d="M17 9Q19 24 37 29" /></svg></div>
        <div class="app run"><svg viewBox="-54 -54 108 108"><use href="#s-itunes" x="-50" y="-50" width="100" height="100" /></svg></div>
        <div class="app"><svg viewBox="-54 -54 108 108"><circle r="48" fill="#f7f4ee" /><g class="petals"><rect v-for="p in petals" :key="p.a" x="-13" y="-42" width="26" height="38" rx="13" :fill="p.c" opacity=".88" :transform="`rotate(${p.a})`" /></g></svg></div>
        <div class="app run"><svg viewBox="-54 -54 108 108"><rect x="-47" y="-41" width="95" height="84" rx="3" fill="#242424" stroke="#77665a" stroke-width="3" /><rect x="-42" y="-36" width="85" height="74" fill="none" stroke="#0b0b0b" stroke-width="4" /><path fill="none" stroke="#f1f1f1" stroke-width="4" d="M-35-27-23-21-35-15M-22-13H-9" /></svg></div>
        <div class="app run"><svg viewBox="-54 -54 108 108"><rect x="-46" y="-40" width="93" height="82" rx="3" fill="#262826" stroke="#756953" stroke-width="3" /><text class="dollar" x="-38" y="-8">$</text><rect x="-18" y="-30" width="11" height="25" fill="#12a026" /></svg></div>
        <div class="app run"><svg viewBox="-54 -54 108 108"><use href="#s-sublime" x="-50" y="-50" width="100" height="100" /></svg></div>
        <div class="app"><svg viewBox="-54 -54 108 108"><path fill="#e7f0fb" stroke="#51729f" stroke-width="4" d="M-48-46Q-48-50-44-50H20Q50-48 50-8 50 44 2 44-46 44-48-4Z" /><path fill="#aac8ef" d="M-44-46-20-46-44 5Z" /><g fill="#b3bccb" stroke="#69788b" stroke-width="2"><rect v-for="a in teeth" :key="a" x="-5" y="-35" width="10" height="12" :transform="`rotate(${a})`" /><circle r="26" /></g><circle r="20" fill="#d3dce8" /><circle r="12" fill="#b7c9e2" stroke="#69788b" stroke-width="4" /></svg></div>
        <div class="app"><svg viewBox="-54 -54 108 108"><circle r="53" fill="#55575a" /><path fill="#fff" d="M-38 8Q-38-26-8-30 5-34 12-25 32-34 40-10 46 8 40 16 34 14 36 2 28 6 26 4V36H12V18Q0 14-7 18V36H-21V15Q-30 20-30 36H-38Z" /><path fill="none" stroke="#55575a" stroke-width="3" d="M10-24Q4-8 24-4 32-8 30-20" /></svg></div>
        <div class="app"><svg viewBox="-54 -54 108 108"><path fill="#f7941e" d="M-4-46A48 48 0 1 0-4 46A55 55 0 0 1-4-46Z" /><circle cx="5" r="48" fill="#2c2255" /><path fill="#49397f" d="M-42 15H52Q40 45 5 45-30 45-42 15Z" /><path fill="#fff" d="M-41-16H51V-11H-41ZM-43-3H53V2H-43ZM-42 10H52V15H-42Z" /><path fill="none" stroke="#222" stroke-width="3" d="M-51 50-42 42M-48 42H-42V48" /></svg></div>
        <div class="app"><svg viewBox="-54 -54 108 108"><path fill="#cbe4e8" stroke="#29395e" stroke-width="4" d="M0-53 49-30V28L0 52-49 28V-30Z" /><path fill="#b4dfd5" d="M0-48 44-30 0-12-44-30Z" /><path fill="#bcd3f2" d="M-46-27 0-8V48L-46 26Z" /><path fill="#8fadd9" d="M46-27 0-8V48L46 26Z" /><path fill="none" stroke="#e7f5fc" stroke-width="5" d="M-45-28 0-9 45-28M0-9V48" /></svg></div>
        <div class="app"><svg viewBox="-54 -54 108 108"><circle r="48" fill="#e8f4fd" /><circle r="44" fill="#1687f5" /><path fill="none" stroke="#fff" stroke-width="7" stroke-linecap="round" d="M-4-27 22 20M5-27-15 9M-30 10H7M21 10H31M-21 20-25 27" /><circle cx="36" cy="-34" r="21" fill="#f0161c" /><text class="badge" x="36" y="-26">1</text></svg></div>
        <div class="app run"><svg viewBox="-54 -54 108 108"><use href="#s-gear" x="-50" y="-50" width="100" height="100" /></svg></div>
        <div class="app run"><svg viewBox="-54 -54 108 108"><path fill="#0d78bf" d="M16-48 44-37 52 30 22 42Z" /><path fill="#242c35" d="M-41-40 18-48 30 42-30 52Z" /><path fill="none" stroke="#2695dc" stroke-width="7" stroke-linejoin="round" d="M-23-6 14 14 10-19-22 13" /></svg></div>
        <div class="app run"><svg viewBox="-54 -54 108 108"><path fill="#efe5d3" stroke="#a59982" stroke-width="3" d="M-32-44H46V26H-32Z" /><path fill="#fafafa" stroke="#909090" stroke-width="2" d="M-50-26 38-38 43 25-40 40Z" /><path fill="#5689d0" d="M-43-20 32-31 36 18-34 30Z" /><path fill="#cfdceb" d="M-38 7Q-5 12 34 0L36 18-34 30Z" /><path fill="#3a5c9c" d="M-5-1 34-10V3Q5 9-5-1Z" /><circle cx="31" cy="20" r="21" fill="#5d6267" stroke="#bcc0c3" stroke-width="5" /><ellipse cx="31" cy="14" rx="13" ry="8" fill="#c9d0d4" /></svg></div>
        <i class="sep" />
        <div class="app"><svg viewBox="-54 -54 108 108"><path fill="#e1e5e8" d="M-29-52H28V-10H-29Z" /><path fill="#fff" stroke="#d6d6d6" d="M-35-45H10L35-14V49H-35Z" /><path fill="#dadada" d="M10-45 35-14 16-20Z" /></svg></div>
        <div class="app"><svg viewBox="-54 -54 108 108"><rect x="-52" y="-30" width="105" height="60" fill="#252b2c" /><rect x="-52" y="-30" width="23" height="60" fill="#e5e5e5" /><path stroke="#3c4a3b" stroke-width="2" d="M-22-18H8M-22-10H0M-22-2H5" /><use href="#s-sublime" x="15" y="12" width="38" height="40" /></svg></div>
        <div class="app"><svg viewBox="-54 -54 108 108"><rect x="-52" y="-42" width="104" height="86" fill="#ededed" stroke="#b7b7b7" stroke-width="2" /><path stroke="#a8a8a8" stroke-width="3" d="M-48-38H48M-35-27H20M-35-20H35M-47-9H43M-45 0H-15M-45 10H35M-45 23H0M-45 30H4M-45 37H0" /><path stroke="#6ea3e0" stroke-width="4" d="M6 13V28" /><use href="#s-gear" x="14" y="12" width="40" height="40" /></svg></div>
        <div class="app"><svg viewBox="-54 -54 108 108"><rect x="-52" y="-30" width="105" height="60" fill="#fff" /><path stroke="#c3c3c3" stroke-width="3" d="M-52-29H52M-45-17H-36" /><use href="#s-chrome" x="14" y="14" width="38" height="38" /></svg></div>
        <div class="app"><svg viewBox="-54 -54 108 108"><rect x="-52" y="-30" width="105" height="60" fill="#fafafa" /><path stroke="#cecece" stroke-width="3" d="M-52-29H52" /><path stroke="#bcc1c6" stroke-width="4" stroke-dasharray="5 9" d="M-45-16H48M-45-2H48M-45 11H48M-45 23H20" /><path stroke="#4eaf8d" stroke-width="6" d="M0 1H6" /><use href="#s-finder" x="14" y="14" width="40" height="40" /></svg></div>
        <div class="app"><svg viewBox="-54 -54 108 108"><rect x="-52" y="-45" width="105" height="91" fill="#f8f8f8" /><path stroke="#cfcfcf" stroke-width="3" d="M-46-36H-30M-46-28H-34M-46-20H-30M-46-10H-30M-46 0H-34M-46 12H-30M-46 22H-30M-10-8H30M-10 14H42M-10 21H42M-10 29H20" /><rect x="-20" y="-2" width="72" height="9" fill="#2c7de0" /><circle cx="-14" cy="-25" r="5" fill="#32a07d" /><path stroke="#d76a5d" stroke-width="4" d="M-22-42H-8" /><path stroke="#65a4e7" stroke-width="3" d="M-22-10V44" /><use href="#s-itunes" x="13" y="12" width="40" height="40" /></svg></div>
        <div class="app"><svg viewBox="-54 -54 108 108"><path fill="#dedede" d="M-39-43H39L30 44Q28 50 20 51H-20Q-28 50-30 44Z" /><ellipse cy="-42" rx="39" ry="9" fill="#9fa6a4" stroke="#f5f5f5" stroke-width="3" /><path fill="#474f4d" d="M-28-40-18-50-6-43 4-53 14-44 26-49 30-39 0-33Z" /><path fill="#fff" d="M-12-46-4-50-2-38ZM18-48 25-44 15-37Z" /><path fill="#5bba9a" d="M5-50 12-44 2-40Z" /><path fill="none" stroke="#cdcdcd" stroke-width="3" d="M-30-26-18-10-28 2M-8-28 2-8-10 10 6 26M28-26 12-6 25 8M-20 20-8 38M14 20 8 42" /></svg></div>
      </div>
    </div>
  </div>
</template>

<style>
html, body { margin: 0; background: #000; overflow: hidden; }
</style>

<style scoped>
* { box-sizing: border-box; }
.desktop { width: 1440px; height: 900px; display: flex; flex-direction: column; overflow: hidden; background: #2a1a14; font-family: Inter, "Noto Sans", sans-serif; }
.symbols { position: absolute; }
.desktop svg { flex: none; display: block; }

.menubar { height: 23px; flex: none; display: flex; justify-content: space-between; border-bottom: 1px solid #2f3f50; background: linear-gradient(90deg, #dbeaf5, #e7f0f8 60%, #eef3f9); color: #373d45; }
.menus { display: grid; grid-template-columns: 34px 73px 41px 44px 49px 65px 90px 63px 70px 60px; align-items: center; padding-left: 20px; font-size: 14px; font-weight: 500; letter-spacing: -.2px; white-space: nowrap; }
.menus svg { margin-top: -2px; }
.menus b { font-weight: 700; font-size: 14.500px; letter-spacing: -.25px; }
.status { display: grid; grid-template-columns: 38px 25px 77px 34px 30px 32px 28px 35px 33px 35px 161px 33px 27px 42px; align-items: center; white-space: nowrap; }
.mem { display: flex; flex-direction: column; padding-left: 1px; }
.mem b { font-size: 7.500px; line-height: 9px; letter-spacing: .1px; }
.mem span { font-size: 10.500px; line-height: 10px; letter-spacing: 0; font-weight: 500; }
.net { display: flex; align-items: baseline; font-size: 14px; font-weight: 500; letter-spacing: 0; }
.net svg { align-self: center; margin-right: 2px; }
.net small { font-size: 10px; letter-spacing: .1px; }
.pct { font-size: 12px; letter-spacing: -.5px; }
.input-a { width: 16px; height: 16px; border-radius: 2px; background: #373d45; color: #fff; font-size: 12px; line-height: 16px; text-align: center; font-weight: 500; }
.date { font-size: 14px; font-weight: 500; letter-spacing: -.18px; }

.window { height: 829px; flex: none; border-radius: 5px; overflow: hidden; display: flex; flex-direction: column; background: #f3f3f3; }
.tabstrip { height: 37px; flex: none; display: flex; background: linear-gradient(#d6d9dc, #dadada); box-shadow: inset 0 -1px #9d9d9d; }
.lights { width: 72px; display: flex; gap: 8px; padding: 13px 0 0 12px; }
.lights i { width: 12px; height: 12px; border-radius: 50%; }
.red { background: #fc3d47; } .amber { background: #fdb800; } .green { background: #0fd53d; }
.tabs { display: flex; padding-top: 8px; margin-right: 9px; }
.tab { position: relative; width: 128px; height: 29px; margin-right: -12.450px; display: flex; align-items: center; padding-left: 16px; }
.tab:last-child { margin-right: -12px; }
.shape { position: absolute; left: 0; top: 0; }
.face { fill: #d0d0d0; }
.edge { fill: none; stroke: #989898; }
.active .face { fill: #f2f2f2; }
.active::after { content: ""; position: absolute; left: 1px; right: 1px; bottom: 0; height: 1px; background: #f2f2f2; }
.fav, .title, .close { position: relative; }
.title { width: 62px; margin-left: 5.500px; font-size: 12px; line-height: 16px; letter-spacing: -.2px; overflow: hidden; white-space: nowrap; color: #000; -webkit-mask-image: linear-gradient(90deg, #000 76%, transparent); mask-image: linear-gradient(90deg, #000 76%, transparent); }
.close { margin-left: 3.500px; margin-top: 1px; }
.cp { font: italic 800 13px Inter, sans-serif; fill: #ff6c2c; letter-spacing: -1px; }
.newtab { margin: 15px 0 0 0; }
.user { font-size: 12px; line-height: 16px; padding: 12px 0 0 9px; color: #111; }

.toolbar { height: 37px; flex: none; display: flex; align-items: center; background: #f2f2f2; border-bottom: 1px solid #cfcfcf; }
.navbtns { display: flex; width: 121px; padding-left: 10px; gap: 12px; }
.navbtns svg:last-child { margin-left: -1px; }
.omnibox { width: 890px; height: 27px; background: #fff; border: 1px solid #b1b1b1; border-radius: 3px; display: flex; align-items: center; padding: 0 5px; }
.url { flex: 1; margin-left: 6px; font-size: 14px; letter-spacing: -.15px; color: #000; position: relative; top: -.5px; }
.url i { font-style: normal; color: #777; }
.extensions { display: flex; gap: 12px; padding-left: 11px; }
.extensions svg { width: 16px; height: 16px; }
.abp { font: bold 6.500px "Liberation Sans", sans-serif; fill: #fff; }
.rex { font: bold 8px "Liberation Sans", sans-serif; fill: #fff; }

.brandbar { height: 91px; flex: none; background: #f3f3f3; padding-left: 64px; display: flex; align-items: center; color: #000; font: 900 24px/30px Lato, sans-serif; }
.brand { width: 247px; letter-spacing: 2.800px; white-space: nowrap; }
.temp { letter-spacing: 1.500px; white-space: nowrap; }
.temp em { font-style: normal; font-size: 23px; position: relative; top: 3px; }
.temp sup { font-size: 18px; line-height: 0; vertical-align: baseline; position: relative; top: -4px; margin-left: 2px; }

.content { height: 566px; flex: none; background: #fff; display: flex; justify-content: space-between; padding: 16px 204px 0 40px; }
.form { width: 480px; padding-top: 22px; display: flex; flex-direction: column; align-items: flex-start; font: 14px/20px "Liberation Serif", serif; color: #666; }
.form label { font-weight: bold; color: #333; margin-bottom: 6px; height: 20px; }
.form label span { font-weight: normal; color: #666; }
.field { width: 184px; height: 36px; border: 1px solid #ccc; padding: 0 8px; font: 16px/34px "Liberation Sans", sans-serif; color: #000; }
.field.full { width: 480px; }
.pair { display: flex; gap: 4px; }
.hint { margin: 6px 0 22px; height: 20px; }
.hint.tight { margin: 8px 0 14px; }
.area { width: 480px; height: 54px; border: 1px solid #ccc; border-radius: 4px; display: flex; justify-content: flex-end; align-items: flex-end; padding: 0 1px 1px 0; }
.file { width: 321px; height: 41px; border: 1px solid #ccc; padding: 0 8px; display: flex; align-items: center; gap: 4px; font: 16px/20px "Liberation Sans", sans-serif; color: #333; }
.choose { width: 96px; height: 23px; border: 1px solid #adadad; background: linear-gradient(#e2e2e2, #f8f8f8); color: #000; text-align: center; line-height: 20px; white-space: nowrap; }
.submit { margin: 60px 0 0; width: 81px; height: 34px; padding: 0; border: 1px solid #000; background: #fff; color: #000; font: bold 14px "Liberation Sans", sans-serif; }

.map { position: relative; width: 500px; height: 500px; overflow: hidden; font-family: Roboto, sans-serif; }
.place text { text-anchor: middle; font-family: Roboto, "Noto Sans", "Noto Sans Devanagari", "Noto Sans Gujarati", sans-serif; fill: #4d4d4d; stroke: #fff; stroke-width: 2px; stroke-opacity: .75; paint-order: stroke; stroke-linejoin: round; }
.place circle { fill: #fff; stroke: #444; stroke-width: 1.200; }
.place.minor text { fill: #777; }
.place.mid text { fill: #3c3c3c; }
.place.major text { fill: #2a2a2a; font-weight: 500; }
.place.major .local { font-weight: 700; }
.place.major circle { stroke: #222; stroke-width: 1.500; }
.state { font: 500 16.500px Roboto, sans-serif; fill: #8e8e8e; stroke: #fff; stroke-width: 2px; stroke-opacity: .7; paint-order: stroke; }
.shield { font: bold 9.500px Roboto, sans-serif; fill: #fff; }
.google { font: 700 19px Lato, sans-serif; stroke: #fff; stroke-width: 3px; paint-order: stroke; }
.types { position: absolute; left: 10px; top: 10px; width: 93px; height: 29px; display: flex; background: #fff; border-radius: 2px; box-shadow: 0 1px 3px rgba(0, 0, 0, .3); font-size: 11px; line-height: 29px; color: #565656; }
.types b { width: 38px; text-align: center; color: #000; font-weight: 500; border-right: 1px solid #e6e6e6; }
.types span { flex: 1; text-align: center; }
.full-screen { position: absolute; left: 461px; top: 10px; width: 25px; height: 25px; background: #fff; display: grid; place-items: center; }
.pegman, .zoom { position: absolute; left: 462px; width: 28px; background: #fff; border-radius: 2px; box-shadow: 0 1px 3px rgba(0, 0, 0, .3); display: grid; place-items: center; }
.pegman { top: 383px; height: 28px; }
.zoom { top: 421px; height: 55px; grid-template-rows: 27px 28px; background: linear-gradient(#e6e6e6, #e6e6e6) 50% 27px / 19px 1px no-repeat #fff; }
.plus { width: 11px; height: 11px; background: linear-gradient(#666, #666) 50% / 11px 3px no-repeat, linear-gradient(#666, #666) 50% / 3px 11px no-repeat; }
.minus { width: 11px; height: 3px; background: #666; }
.credits { position: absolute; right: 0; bottom: 0; width: 286px; height: 14px; padding: 0 6px 0 5px; display: flex; justify-content: space-between; background: rgba(245, 245, 245, .75); font-size: 10px; line-height: 14px; letter-spacing: .02px; color: #444; white-space: nowrap; }

.footer { height: 98px; flex: none; display: flex; justify-content: center; gap: 36px; padding-top: 64px; background: #f3f3f3; font: 14px/20px "Open Sans", sans-serif; color: #757575; }

.shelf { height: 48px; flex: none; position: relative; display: flex; justify-content: center; }
.wood { position: absolute; left: 0; top: 0; }
.dock { position: relative; width: 1116px; height: 48px; padding-left: 2.500px; display: flex; border-radius: 5px 5px 0 0; box-shadow: 0 0 46px rgba(0, 0, 0, .24), 0 -1px 2px rgba(0, 0, 0, .2); clip-path: inset(-60px -60px 0 -60px); background: linear-gradient(rgba(90, 80, 80, .14), rgba(255, 130, 40, .1)), linear-gradient(90deg, #aa7568 0, #bb7865 18%, #b87662 23%, #996a4c 27%, #906250 30%, #b3672f 34%, #c06c2a 42%, #cc7526 55%, #e07e1c 70%, #e6801c 78%, #e0721f 88%, #be7a26 95%, #a87728 100%); }
.app { position: relative; width: 39px; padding: 4px 0 0 1.800px; }
.app svg { width: 36px; height: 36px; overflow: visible; }
.run::after { content: ""; position: absolute; left: 17.500px; bottom: 2px; width: 4px; height: 4px; border-radius: 50%; background: #3a0a05; }
.sep { width: 1px; height: 36px; margin: 6px 8.500px 0 8.500px; background: rgba(120, 50, 0, .6); }
.mar { font: 500 16px Inter, sans-serif; fill: #fff; text-anchor: middle; }
.day { font: 400 42px Inter, sans-serif; fill: #333; text-anchor: middle; letter-spacing: -2px; }
.dollar { font: bold 26px "Liberation Mono", monospace; fill: #12a026; }
.badge { font: 500 24px Inter, sans-serif; fill: #fff; text-anchor: middle; }
</style>
